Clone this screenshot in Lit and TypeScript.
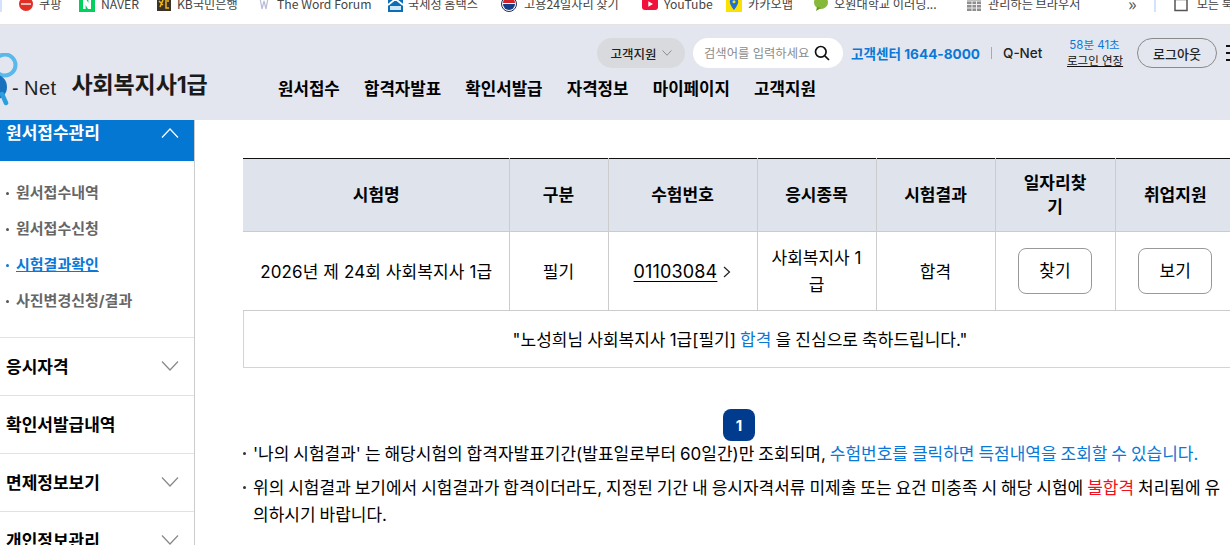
import { LitElement, html, css, svg } from "lit";
import { customElement } from "lit/decorators.js";

const ic: Record<string, unknown> = {
  coupang: svg`<circle cx="8" cy="8" r="7" fill="#e03026"/><rect x="3" y="7" width="10" height="2" fill="#f7b9b5"/>`,
  naver: svg`<rect x="0" y="0" width="16" height="16" fill="#03cf5d"/><path d="M4 3h3l2.4 4V3H12v10H9L6.6 9v4H4z" fill="#fff"/>`,
  kb: svg`<rect x="1" y="1" width="14" height="14" fill="#3a3328"/><path d="M3 5l4 4M7 4l-3 7M9 5l4 0M10 6v6h3" stroke="#f5b81c" stroke-width="1.5" fill="none"/>`,
  w: svg`<path d="M4 2l2 11 2-8 2 8 2-11" stroke="#b9bcd8" stroke-width="1.2" fill="none"/>`,
  home: svg`<rect x="1" y="1" width="15" height="15" fill="#0b6fb8"/><path d="M1 9l7.5-6L16 9" stroke="#fff" stroke-width="1.8" fill="none"/><rect x="3" y="10" width="11" height="4" fill="#cfe6f5"/>`,
  gov: svg`<circle cx="8" cy="8" r="7.5" fill="#fff" stroke="#1c2c5a"/><path d="M2 7a6 6 0 0 1 12 0z" fill="#d2232a"/><path d="M2 8a6 6 0 0 0 12 0z" fill="#173d87"/>`,
  yt: svg`<rect x="0" y="2" width="16" height="12" rx="3" fill="#f0123b"/><path d="M6.3 5.2v5.6L11 8z" fill="#fff"/>`,
  map: svg`<rect x="0" y="0" width="16" height="16" fill="#fae100"/><path d="M8 1.5a4.2 4.2 0 0 0-4.2 4.2C3.800 9 8 14 8 14s4.200-5 4.200-8.300A4.200 4.200 0 0 0 8 1.500z" fill="#1f6fd8"/><circle cx="8" cy="5.700" r="1.500" fill="#fae100"/>`,
  leaf: svg`<ellipse cx="9" cy="6.500" rx="7" ry="6.500" fill="#86b83a"/><path d="M5 11l-1 4 5-3z" fill="#5f9a24"/>`,
  table: svg`<rect x="1" y="1" width="14" height="14" fill="#8e8e8e"/><path d="M1 5h14M1 8.500h14M1 12h14M6 5v10M10.500 5v10" stroke="#eee" stroke-width="1"/>`,
  folder: svg`<path d="M2 3.500h12v11H2z" fill="none" stroke="#555" stroke-width="1.500"/>`,
};

const marks = [
  { i: "coupang", t: "쿠팡", x: 18, tx: 39 },
  { i: "naver", t: "NAVER", x: 79, tx: 101 },
  { i: "kb", t: "KB국민은행", x: 156, tx: 177 },
  { i: "w", t: "The Word Forum", x: 256, tx: 277 },
  { i: "home", t: "국세청 홈택스", x: 387, tx: 408 },
  { i: "gov", t: "고용24일자리 찾기", x: 501, tx: 524 },
  { i: "yt", t: "YouTube", x: 642, tx: 664 },
  { i: "map", t: "카카오맵", x: 726, tx: 748 },
  { i: "leaf", t: "오원대학교 이러닝...", x: 812, tx: 834 },
  { i: "table", t: "관리하는 브라우저", x: 966, tx: 988 },
];

const chevron = (up: boolean) => html`<svg class="chev" width="18" height="10" viewBox="0 0 18 10">
  <path d="${up ? "M1 9.500L9 1l8 8.500" : "M1 .5L9 9l8-8.500"}" fill="none" stroke="currentColor" stroke-width="1.200"/></svg>`;

@customElement("app-root")
export class AppRoot extends LitElement {
  static styles = css`
    :host { display: block; width: 1230px; height: 545px; overflow: hidden; background: #fff;
      font-family: Inter, "Noto Sans CJK KR", "Noto Sans", sans-serif; color: #000; }
    * { box-sizing: border-box; }
    a { color: inherit; }

    .marks { height: 25px; border-bottom: 1px solid #e4e4e4; display: flex; overflow: hidden; position: relative;
      font-family: "Noto Sans CJK KR", "Liberation Sans", sans-serif; font-size: 12.200px; color: #444; }
    .marks::before { content: ""; position: absolute; left: 0; top: 0; width: 2px; height: 12px; background: #d3e3fd; }
    .mark { display: flex; align-items: center; height: 12px; flex: none; margin-top: -2px; }
    .mark svg { flex: none; }
    .mark span { white-space: nowrap; line-height: 12px; }
    .more { flex: none; font-size: 18px; line-height: 8px; color: #555; margin-top: -1px; }
    .sep { flex: none; width: 2px; height: 12px; background: #d3e3fd; margin-left: 17px; }

    .header { height: 95px; background: #e3e6ee; display: flex; }
    .logo { flex: none; width: 278px; display: flex; }
    .logo svg { flex: none; margin-top: 28px; }
    .net { font-family: "Liberation Sans", sans-serif; font-size: 20px; letter-spacing: .4px; color: #222; margin: 50px 0 0 -8px; line-height: 26px; white-space: nowrap; }
    .dash { margin-right: 5px; }
    .site { font-size: 23px; font-weight: 700; letter-spacing: -.1px; margin: 45px 0 0 15px; line-height: 30px; white-space: nowrap; color: #1b1b1b; }
    .head-right { flex: 1; min-width: 0; display: flex; flex-direction: column; }
    .util { display: flex; align-items: center; height: 30px; margin-top: 13px; padding-left: 319px; white-space: nowrap; }
    .util > * { flex: none; }
    .pill { width: 88px; height: 30px; border-radius: 15px; background: #d9dade; display: flex; align-items: center; justify-content: center; gap: 5px; font-size: 12.500px; font-weight: 500; color: #222; }
    .pill .chev { width: 10px; height: 6px; color: #666; }
    .search { width: 150px; height: 30px; margin-left: 8px; border-radius: 15px; background: #fff; display: flex; align-items: center; justify-content: space-between; padding: 0 13px 0 11px; font-size: 12.300px; color: #8b8b8b; }
    .center { margin-left: 8px; width: 129px; font-size: 13.600px; font-weight: 700; color: #0a78d6; }
    .div { width: 1px; height: 12px; background: #aaa; margin: 0 11px; }
    .qnet { font-size: 13.500px; font-weight: 500; color: #222; width: 39px; }
    .timer { margin-left: 25px; width: 55px; text-align: center; font-size: 11.500px; line-height: 16px; color: #0a78d6; }
    .timer a { display: block; color: #111; }
    .logout { margin-left: 15px; width: 80px; height: 30px; border: 1px solid #8a8a8a; border-radius: 15px; display: flex; align-items: center; justify-content: center; font-size: 13px; font-weight: 500; color: #222; }
    .burger { margin-left: 9px; width: 10px; height: 16px; border-top: 2px solid #111; border-bottom: 2px solid #111; position: relative; }
    .burger::after { content: ""; position: absolute; left: 0; right: 0; top: 5px; height: 2px; background: #111; }
    .nav { display: flex; gap: 24.200px; margin-top: 8px; font-size: 16.800px; font-weight: 700; line-height: 26px; white-space: nowrap; }

    .main { display: flex; height: 425px; }
    .side { flex: none; width: 195px; border-right: 1px solid #ccc; overflow: hidden; padding-left: 6px; }
    .side-top { margin-left: -6px; height: 41px; padding: 1px 15px 0 6px; background: #0477d3; color: #fff; display: flex; justify-content: space-between; font-size: 17px; font-weight: 700; line-height: 24px; }
    .side-top .chev { margin-top: 7px; color: #fff; }
    .subs { height: 177px; margin: 0 0 0 -6px; padding: 14px 0 0 6px; display: flex; flex-direction: column; border-bottom: 1px solid #e2e2e2; list-style: none; }
    .subs li { height: 36px; line-height: 36px; font-size: 15px; font-weight: 700; color: #666; padding-left: 10px; position: relative; white-space: nowrap; }
    .subs li::before { content: ""; position: absolute; left: 0; top: 17px; width: 3px; height: 3px; border-radius: 50%; background: #555; }
    .subs li.on { color: #0a78d6; }
    .subs li.on::before { background: #0a78d6; }
    .sec { height: 58px; margin-left: -6px; padding: 0 15px 2px 6px; border-bottom: 1px solid #e2e2e2; display: flex; align-items: center; justify-content: space-between; font-size: 17px; font-weight: 700; white-space: nowrap; }
    .sec .chev { color: #888; }

    .content { flex: 1; min-width: 0; overflow: hidden; padding: 38px 0 0 48px; }
    table { table-layout: fixed; border-collapse: collapse; width: 992px; font-size: 17px; border-top: 1px solid #111; }
    th { height: 73px; background: #dfe3ec; font-weight: 700; border-left: 1px solid #ccc; border-bottom: 1px solid #ccc; padding: 0 24px; word-break: break-all; line-height: 24px; }
    td { height: 79px; text-align: center; font-weight: 400; border-left: 1px solid #ccc; border-bottom: 1px solid #ccc; padding: 2px 14px 0; word-break: break-all; line-height: 27px; }
    td.act { padding: 0 14px; }
    th:first-child, td:first-child { border-left: 0; padding-left: 1px; padding-right: 0; }
    td.name { white-space: nowrap; letter-spacing: .1px; }
    td.multi { padding-top: 1px; }
    .no { white-space: nowrap; display: inline-flex; align-items: center; gap: 6px; }
    .no a { font-size: 18px; letter-spacing: .15px; text-decoration: underline; text-underline-offset: 3px; }
    .btn { width: 74px; height: 46px; padding-top: 1px; border: 1px solid #999; border-radius: 8px; background: #fff; display: inline-flex; align-items: center; justify-content: center; font: inherit; color: #000; vertical-align: middle; }
    .msg { width: 992px; height: 57px; border: 1px solid #d4d4d4; border-top: 0; display: flex; align-items: center; justify-content: center; padding: 0 0 2px 2px; font-size: 17px; word-spacing: -.6px; white-space: pre; }
    .blue { color: #0a78d6; }
    .red { color: #f01020; }
    .pager { display: flex; justify-content: center; margin-top: 41px; width: 992px; }
    .pager span { width: 32px; height: 32px; border-radius: 8px; background: #003b8e; color: #fff; font-weight: 700; font-size: 15px; display: flex; align-items: center; justify-content: center; }
    .notes { list-style: none; margin: 0; padding: 0; width: 982px; font-size: 17px; word-spacing: -.85px; line-height: 27px; }
    .notes li { padding-left: 10px; position: relative; margin-bottom: 7px; word-break: break-all; }
    .notes li::before { content: ""; position: absolute; left: 0; top: 11px; width: 3px; height: 3px; border-radius: 50%; background: #333; }
  `;

  render() {
    return html`
      <div class="marks">
        ${marks.map((m, k) => html`<div class="mark" style="margin-left:${k === 0 ? m.x : 0}px;width:${(marks[k + 1]?.x ?? 1128) - m.x}px">
          <svg width="16" height="16" viewBox="0 0 16 16">${ic[m.i]}</svg>
          <span style="margin-left:${m.tx - m.x - 16}px">${m.t}</span></div>`)}
        <div class="more">»</div>
        <div class="sep"></div>
        <div class="mark" style="margin-left:17px"><svg width="16" height="16" viewBox="0 0 16 16">${ic.folder}</svg><span style="margin-left:8px">모든 북마크</span></div>
      </div>
      <div class="header">
        <div class="logo">
          <svg width="20" height="62" viewBox="0 0 20 62">
            <circle cx="5" cy="12" r="10.500" fill="none" stroke="#5bb8ea" stroke-width="4"/>
            <circle cx="-6" cy="34" r="13" fill="#1a70bd"/>
            <path d="M2 41l4 9" stroke="#2a9fe0" stroke-width="4.500" stroke-linecap="round"/>
          </svg>
          <span class="net"><span class="dash">-</span>Net</span>
          <span class="site">사회복지사1급</span>
        </div>
        <div class="head-right">
          <div class="util">
            <div class="pill">고객지원 ${chevron(false)}</div>
            <div class="search"><span>검색어를 입력하세요</span>
              <svg width="16" height="16" viewBox="0 0 16 16"><circle cx="6.800" cy="6.800" r="5.300" fill="none" stroke="#111" stroke-width="1.700"/><path d="M10.800 10.800L15 15" stroke="#111" stroke-width="1.700"/></svg></div>
            <div class="center">고객센터 1644-8000</div>
            <div class="div"></div>
            <div class="qnet">Q-Net</div>
            <div class="timer">58분 41초<a href="#">로그인 연장</a></div>
            <div class="logout">로그아웃</div>
            <div class="burger"></div>
          </div>
          <div class="nav">
            ${["원서접수", "합격자발표", "확인서발급", "자격정보", "마이페이지", "고객지원"].map((n) => html`<span>${n}</span>`)}
          </div>
        </div>
      </div>
      <div class="main">
        <aside class="side">
          <div class="side-top">원서접수관리 ${chevron(true)}</div>
          <ul class="subs">
            <li>원서접수내역</li>
            <li>원서접수신청</li>
            <li class="on"><a href="#">시험결과확인</a></li>
            <li>사진변경신청/결과</li>
          </ul>
          <div class="sec">응시자격 ${chevron(false)}</div>
          <div class="sec">확인서발급내역</div>
          <div class="sec">면제정보보기 ${chevron(false)}</div>
          <div class="sec">개인정보관리 ${chevron(false)}</div>
        </aside>
        <section class="content">
          <table>
            <colgroup>
              <col style="width:266px"/><col style="width:99px"/><col style="width:149px"/><col style="width:119px"/>
              <col style="width:119px"/><col style="width:120px"/><col style="width:120px"/>
            </colgroup>
            <thead><tr><th>시험명</th><th>구분</th><th>수험번호</th><th>응시종목</th><th>시험결과</th><th>일자리찾기</th><th>취업지원</th></tr></thead>
            <tbody><tr>
              <td class="name">2026년 제 24회 사회복지사 1급</td>
              <td>필기</td>
              <td><span class="no"><a href="#">01103084</a>
                <svg width="8" height="12" viewBox="0 0 8 12"><path d="M1 1l5.500 5L1 11" fill="none" stroke="#222" stroke-width="1.200"/></svg></span></td>
              <td class="multi">사회복지사 1급</td>
              <td>합격</td>
              <td class="act"><button class="btn">찾기</button></td>
              <td class="act"><button class="btn">보기</button></td>
            </tr></tbody>
          </table>
          <div class="msg">"노성희님 사회복지사 1급[필기] <span class="blue">합격</span> 을 진심으로 축하드립니다."</div>
          <div class="pager"><span>1</span></div>
          <ul class="notes">
            <li>'나의 시험결과' 는 해당시험의 합격자발표기간(발표일로부터 60일간)만 조회되며, <span class="blue">수험번호를 클릭하면 득점내역을 조회할 수 있습니다.</span></li>
            <li>위의 시험결과 보기에서 시험결과가 합격이더라도, 지정된 기간 내 응시자격서류 미제출 또는 요건 미충족 시 해당 시험에 <span class="red">불합격</span> 처리됨에 유의하시기 바랍니다.</li>
          </ul>
        </section>
      </div>
    `;
  }
}
